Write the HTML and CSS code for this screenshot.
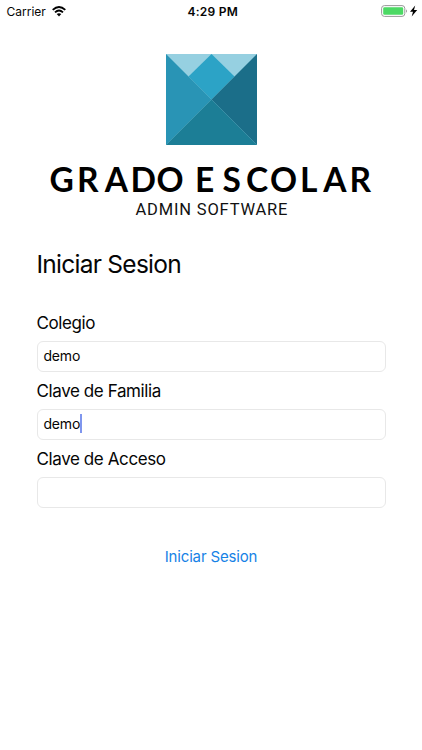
FILE: index.html
```html
<!DOCTYPE html>
<html lang="es">
<head>
<meta charset="utf-8">
<meta name="viewport" content="width=device-width, initial-scale=1">
<title>Grado Escolar</title>
<link rel="stylesheet" href="styles.css">
</head>
<body>
<header class="status">
  <div class="carrier"><span class="carrier-name">Carrier</span>
    <svg class="wifi" width="14" height="11" viewBox="0 0 14 11" fill="none" stroke="#000" stroke-width="1.9"><path d="M.7 3.9Q7-1.8 13.3 3.9M3 6.4Q7 2.8 11 6.4"/><path d="M4.7 8.1Q7 6.2 9.3 8.1L7 10.6Z" fill="#000" stroke="none"/></svg>
  </div>
  <div class="clock">4:29 PM</div>
  <div class="power">
    <svg width="37" height="12" viewBox="0 0 37 12"><rect x=".6" y=".6" width="23.2" height="10.8" rx="2.8" fill="#fff" stroke="#999" stroke-width="1"/><rect x="2.2" y="2.2" width="20" height="7.6" rx="1.3" fill="#4cd964"/><path d="M25 4.2Q27 6 25 7.8Z" fill="#999"/><path d="M34.2 .4L29 6.8H32L30.7 11.6L36.2 5.1H33Z" fill="#000"/></svg>
  </div>
</header>
<main>
  <svg class="logo" width="91" height="91" viewBox="0 0 91 91">
    <path d="M0 0H91V91H0Z" fill="#96d0e1"/>
    <path d="M45.5 0L68.5 22.5L45.5 45.5L22.5 22.5Z" fill="#2ca3c6"/>
    <path d="M0 0L45.5 45.5L0 91Z" fill="#2994b5"/>
    <path d="M91 0L45.5 45.5L91 91Z" fill="#1b6e89"/>
    <path d="M0 91L45.5 45.5L91 91Z" fill="#1c7e96"/>
  </svg>
  <svg class="wordmark" width="422" height="54" viewBox="0 0 422 54">
    <text class="brand" x="49.5 77 104.7 130.5 156.5" y="32">GRADO</text>
    <text class="brand" x="195 222.5 246 270 300 323.3 349.5" y="32">ESCOLAR</text>
    <text class="tagline" x="135.5" y="54.5" textLength="152">ADMIN SOFTWARE</text>
  </svg>
  <form class="login">
    <h1>Iniciar Sesion</h1>
    <div class="label colegio">Colegio</div>
    <div class="field">demo</div>
    <div class="label familia">Clave de Familia</div>
    <div class="field">demo<span class="caret"></span></div>
    <div class="label acceso">Clave de Acceso</div>
    <div class="field"></div>
    <div class="submit"><span>Iniciar Sesion</span></div>
  </form>
</main>
</body>
</html>
```
FILE: styles.css
```css
* { box-sizing: border-box; }
body { margin: 0; width: 422px; height: 750px; overflow: hidden; background: #fff; color: #050505; font-family: Inter, "Liberation Sans", sans-serif; }
.status { display: grid; grid-template-columns: 1fr auto 1fr; align-items: center; height: 22px; padding: 0 4px 0 6.5px; }
.carrier { display: flex; align-items: center; gap: 6px; font-size: 12px; letter-spacing: 0; }
.clock { font-size: 12px; font-weight: 600; letter-spacing: .25px; padding-left: 1px; }
.power { display: flex; justify-content: flex-end; }
main { display: flex; flex-direction: column; align-items: center; padding-top: 32px; }
.logo { display: block; }
.wordmark { display: block; margin-top: 15px; overflow: visible; }
.brand { font: 700 33.5px Lato, sans-serif; fill: #000; }
.tagline { font: 400 16.5px Roboto, sans-serif; fill: #111; }
.login { width: 349px; margin-top: 34px; }
h1 { margin: 0; font-size: 24.5px; line-height: 32px; font-weight: 400; letter-spacing: -.74px; }
.label { height: 22px; font-size: 17px; line-height: 22px; letter-spacing: -.4px; white-space: nowrap; }
.colegio { margin-top: 32px; }
.familia, .acceso { margin-top: 8px; }
.field { display: flex; align-items: center; height: 31px; margin-top: 7px; padding: 0 6px 2px; border: 1px solid #e8e8e8; border-radius: 6px; font-size: 14px; letter-spacing: -.2px; }
.caret { width: 2px; height: 19px; background: #7f96ee; }
.submit { margin-top: 38px; text-align: center; font-size: 15px; line-height: 22px; letter-spacing: -.15px; color: #1682e6; }
```
